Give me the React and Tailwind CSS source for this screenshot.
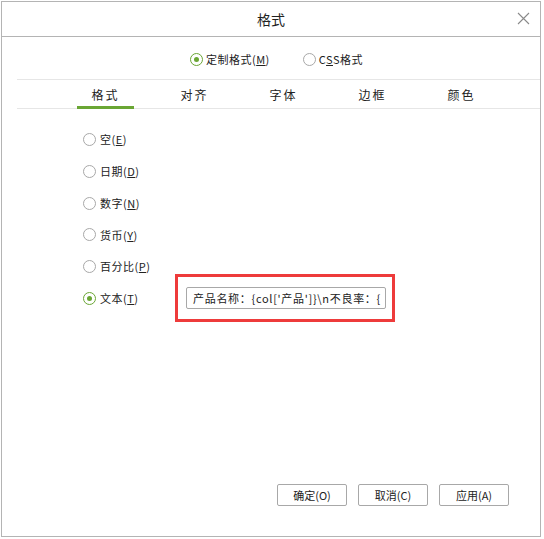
import React, { useState } from 'react';

const font = { fontFamily: '"Noto Sans CJK SC", "Liberation Sans", sans-serif' };

function Radio({ checked }) {
  return (
    <span className={`inline-flex items-center justify-center w-[13px] h-[13px] rounded-full border ${checked ? 'border-[#6aa634]' : 'border-[#a8a8a8]'} bg-white`}>
      {checked && <span className="w-[5px] h-[5px] rounded-full bg-[#6aa634]" />}
    </span>
  );
}

export default function App() {
  const [tab, setTab] = useState(0);
  const tabs = ['格式', '对齐', '字体', '边框', '颜色'];
  const kinds = [
    ['空', 'E'],
    ['日期', 'D'],
    ['数字', 'N'],
    ['货币', 'Y'],
    ['百分比', 'P'],
    ['文本', 'T'],
  ];

  return (
    <div className="w-[544px] h-[539px] bg-white pt-px pl-px text-[#222]" style={font}>
      <div className="w-[540px] h-[536px] border border-[#b4b4b4] flex flex-col">
        {/* header */}
        <div className="h-[35px] border-b border-[#b4b4b4] flex items-center justify-center relative shrink-0">
          <span className="text-[14px] leading-none">格式</span>
          <svg className="absolute right-[10px] top-[10px]" width="13" height="13" viewBox="0 0 13 13">
            <path d="M1 1L12 12M12 1L1 12" stroke="#8a8a8a" strokeWidth="1.1" />
          </svg>
        </div>

        {/* mode radios */}
        <div className="h-[42px] flex items-center justify-center gap-[33px] text-[11px] pt-[2px] pl-[11px]">
          <label className="flex items-center gap-[3px]">
            <Radio checked />
            <span className="tracking-[0.5px]">定制格式(<span className="underline">M</span>)</span>
          </label>
          <label className="flex items-center gap-[3px]">
            <Radio />
            <span className="tracking-[0.5px]">C<span className="underline">S</span>S格式</span>
          </label>
        </div>

        {/* tabs */}
        <div className="ml-[15px] border-t border-b border-[#e6e6e6] h-[30px] flex pl-[44px]">
          {tabs.map((t, i) => (
            <button
              key={t}
              onClick={() => setTab(i)}
              className="w-[89px] h-full flex items-center justify-center relative text-[12px] tracking-[2px] pt-[2px]"
            >
              {t}
              {tab === i && <span className="absolute left-[16px] right-[16px] -bottom-px h-[3px] bg-[#6aa634]" />}
            </button>
          ))}
        </div>

        {/* format list */}
        <div className="flex flex-col pl-[81px] pt-[21px] gap-[12.8px] text-[11px]">
          {kinds.map(([label, key], i) => (
            <div key={key} className="flex items-center h-[19px]">
              <label className="flex items-center gap-[4px] w-[92px]">
                <Radio checked={i === 5} />
                <span className="tracking-[0.5px]">{label}(<span className="underline">{key}</span>)</span>
              </label>
              {i === 5 && (
                <div className="border-[3px] border-[#ee3b3b] w-[220px] h-[48px] -my-[14px] flex items-center pl-[8px]">
                  <div className="w-[200px] h-[22px] border border-[#a8a8a8] rounded-[2px] flex items-center px-[6px] overflow-hidden whitespace-nowrap text-[11px] tracking-[0.7px]">
                    产品名称：{"{col['产品']}\\n不良率：{"}
                  </div>
                </div>
              )}
            </div>
          ))}
        </div>

        <div className="flex-1" />

        {/* buttons */}
        <div className="flex justify-end gap-[11px] pr-[31px] pb-[30px] text-[11px]">
          {['确定(O)', '取消(C)', '应用(A)'].map((b) => (
            <button key={b} className="w-[70px] h-[22px] border border-[#a8a8a8] rounded-[2px] bg-white flex items-center justify-center">
              {b}
            </button>
          ))}
        </div>
      </div>
    </div>
  );
}
